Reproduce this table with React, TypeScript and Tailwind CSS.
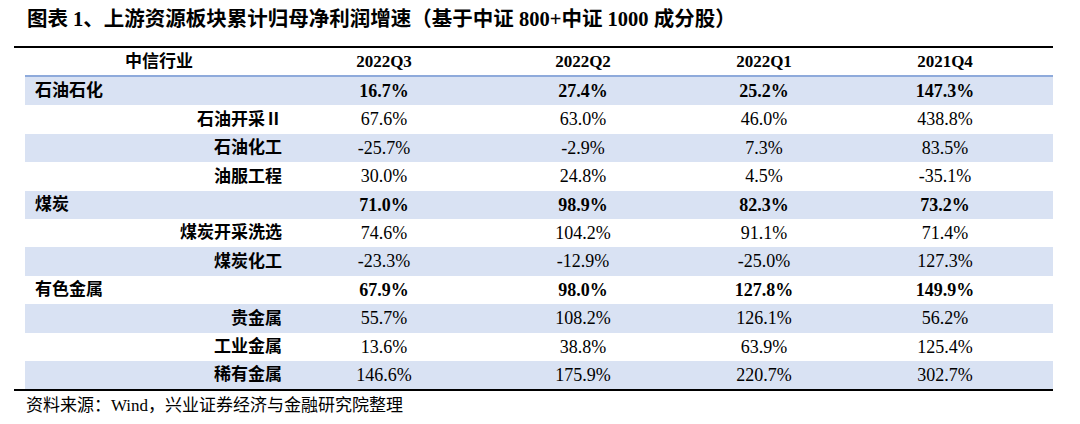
import React from "react";

type Row = { label: string; main: boolean; vals: string[] };

const rows: Row[] = [
  { label: "石油石化", main: true, vals: ["16.7%", "27.4%", "25.2%", "147.3%"] },
  { label: "石油开采Ⅱ", main: false, vals: ["67.6%", "63.0%", "46.0%", "438.8%"] },
  { label: "石油化工", main: false, vals: ["-25.7%", "-2.9%", "7.3%", "83.5%"] },
  { label: "油服工程", main: false, vals: ["30.0%", "24.8%", "4.5%", "-35.1%"] },
  { label: "煤炭", main: true, vals: ["71.0%", "98.9%", "82.3%", "73.2%"] },
  { label: "煤炭开采洗选", main: false, vals: ["74.6%", "104.2%", "91.1%", "71.4%"] },
  { label: "煤炭化工", main: false, vals: ["-23.3%", "-12.9%", "-25.0%", "127.3%"] },
  { label: "有色金属", main: true, vals: ["67.9%", "98.0%", "127.8%", "149.9%"] },
  { label: "贵金属", main: false, vals: ["55.7%", "108.2%", "126.1%", "56.2%"] },
  { label: "工业金属", main: false, vals: ["13.6%", "38.8%", "63.9%", "125.4%"] },
  { label: "稀有金属", main: false, vals: ["146.6%", "175.9%", "220.7%", "302.7%"] },
];

const heights = ["h-[28px]", "h-[29px]", "h-[28px]", "h-[29px]", "h-[28px]", "h-[28px]", "h-[29px]", "h-[28px]", "h-[29px]", "h-[28px]", "h-[28px]"];

const colW = ["w-[182px]", "w-[216px]", "w-[146px]", "w-[216px]"];

export default function App() {
  return (
    <div
      className="w-[1080px] h-[424px] bg-white text-black overflow-hidden"
      style={{ fontFamily: "'Liberation Serif', 'Noto Sans CJK SC', serif" }}
    >
      <div className="h-[46px] pt-[8px] pl-[27px] text-[20.5px] leading-[22px] font-bold whitespace-nowrap">
        图表 1、上游资源板块累计归母净利润增速（基于中证 800+中证 1000 成分股）
      </div>
      <div className="ml-[14px] w-[1039px] border-t-2 border-b-2 border-black">
        <div className="flex h-[27px] items-center pl-[11px] text-[17px] font-bold">
          <div className="w-[268px] text-center">中信行业</div>
          {["2022Q3", "2022Q2", "2022Q1", "2021Q4"].map((h, i) => (
            <div key={h} className={`${colW[i]} text-center`}>
              {h}
            </div>
          ))}
        </div>
        <div className="ml-[11px] border-t-2 border-[#8eaadb]">
          {rows.map((r, idx) => (
            <div
              key={r.label}
              className={`flex items-center ${heights[idx]} ${idx % 2 === 0 ? "bg-[#d9e2f3]" : "bg-white"}`}
            >
              <div
                className={`w-[268px] text-[17px] font-bold ${r.main ? "text-left pl-[10px]" : "text-right pr-[11px]"}`}
              >
                {r.label}
              </div>
              {r.vals.map((v, i) => (
                <div key={i} className={`${colW[i]} text-center text-[18px] ${r.main ? "font-bold" : ""}`}>
                  {v}
                </div>
              ))}
            </div>
          ))}
        </div>
      </div>
      <div className="pl-[26px] pt-[4px] text-[17px] leading-[22px] whitespace-nowrap">
        资料来源：Wind，兴业证券经济与金融研究院整理
      </div>
    </div>
  );
}
